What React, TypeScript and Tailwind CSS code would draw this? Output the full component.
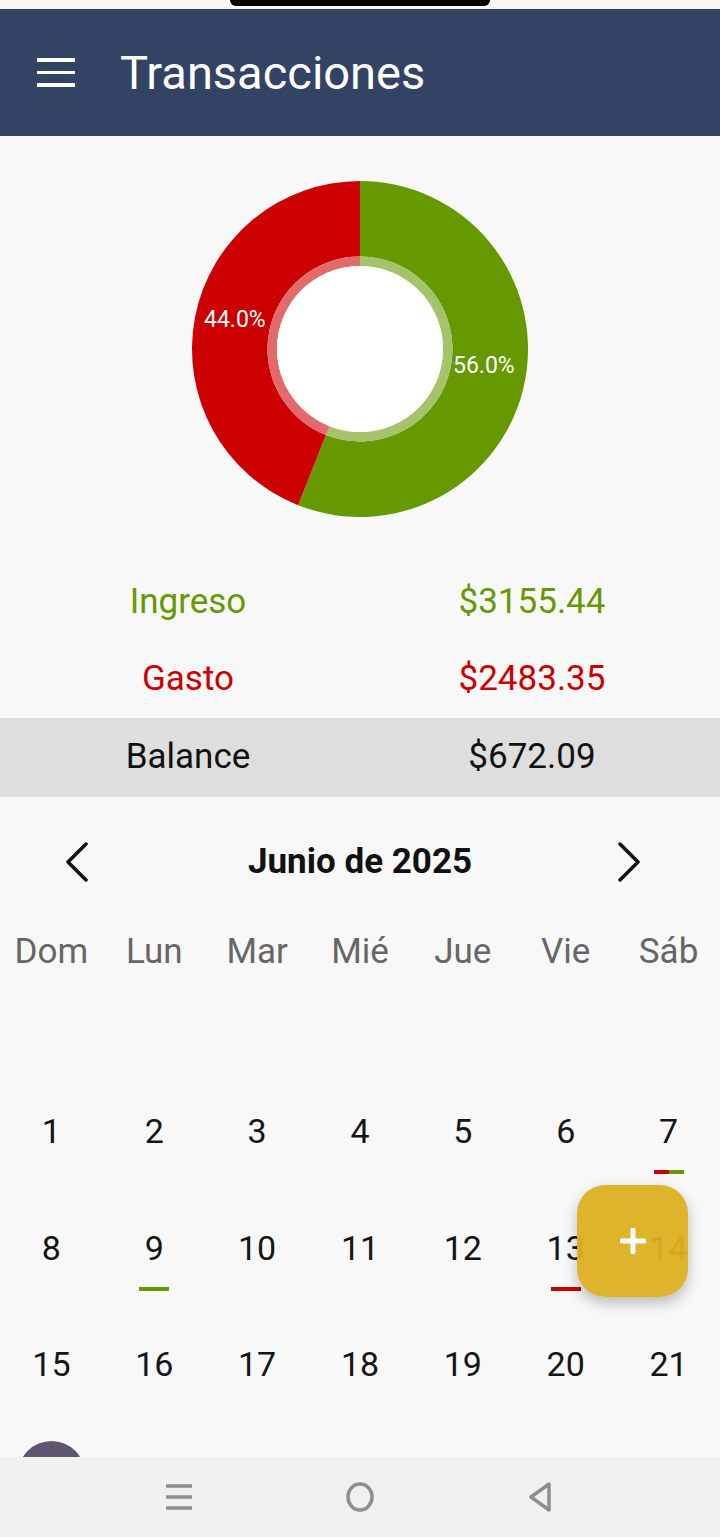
import React from "react";

const FONT = { fontFamily: "Roboto, 'Noto Sans', Arial, sans-serif" };

const CX = 168;
const CY = 168;

function arcPath(r0: number, r1: number, startDeg: number, endDeg: number) {
  // angles measured clockwise from 12 o'clock
  const pt = (r: number, a: number) => {
    const rad = ((a - 90) * Math.PI) / 180;
    return [CX + r * Math.cos(rad), CY + r * Math.sin(rad)];
  };
  const large = endDeg - startDeg > 180 ? 1 : 0;
  const [x1, y1] = pt(r1, startDeg);
  const [x2, y2] = pt(r1, endDeg);
  const [x3, y3] = pt(r0, endDeg);
  const [x4, y4] = pt(r0, startDeg);
  return `M${x1} ${y1} A${r1} ${r1} 0 ${large} 1 ${x2} ${y2} L${x3} ${y3} A${r0} ${r0} 0 ${large} 0 ${x4} ${y4} Z`;
}

function Donut() {
  const split = 0.56 * 360;
  return (
    <div className="relative w-[336px] h-[336px]">
      <svg width="336" height="336" viewBox="0 0 336 336">
        <path d={arcPath(92.5, 168, 0, split)} fill="#669900" />
        <path d={arcPath(92.5, 168, split, 360)} fill="#cc0000" />
        <path d={arcPath(83, 92.5, 0, split)} fill="#a4c46b" />
        <path d={arcPath(83, 92.5, split, 360)} fill="#e26a6a" />
        <circle cx={CX} cy={CY} r={83} fill="#ffffff" />
      </svg>
      <span className="absolute left-[12px] top-[125px] text-[23px] leading-[28px] text-white">44.0%</span>
      <span className="absolute left-[261px] top-[171px] text-[23px] leading-[28px] text-white">56.0%</span>
    </div>
  );
}

type Mark = "green" | "red" | "both";

const MARKS: Record<number, Mark> = { 7: "both", 9: "green", 13: "red" };

const WEEKS = [
  [1, 2, 3, 4, 5, 6, 7],
  [8, 9, 10, 11, 12, 13, 14],
  [15, 16, 17, 18, 19, 20, 21],
];

const DAYS = ["Dom", "Lun", "Mar", "Mié", "Jue", "Vie", "Sáb"];

function DayCell({ day }: { day: number }) {
  const mark = MARKS[day];
  return (
    <div className="flex flex-col items-center h-[116.5px] pt-[40px]">
      <span className="text-[34px] leading-[36px] text-[#151515]">{day}</span>
      {mark === "green" && <div className="mt-[21px] w-[30px] h-[4px] bg-[#669900]" />}
      {mark === "red" && <div className="mt-[21px] w-[30px] h-[4px] bg-[#cc0000]" />}
      {mark === "both" && (
        <div className="mt-[21px] flex">
          <div className="w-[15px] h-[4px] bg-[#cc0000]" />
          <div className="w-[15px] h-[4px] bg-[#669900]" />
        </div>
      )}
    </div>
  );
}

export default function App() {
  return (
    <div className="w-[720px] h-[1537px] flex flex-col bg-[#f8f8f8] overflow-hidden" style={FONT}>
      {/* status strip */}
      <div className="h-[9px] flex justify-center bg-[#f6f6f6]">
        <div className="w-[260px] h-[6px] bg-black rounded-b-[12px]" />
      </div>

      {/* app bar */}
      <div className="h-[127px] bg-[#334363] flex items-center">
        <div className="ml-[37px] w-[38px] flex flex-col gap-[9px]">
          <div className="h-[3.5px] bg-white" />
          <div className="h-[3.5px] bg-white" />
          <div className="h-[3.5px] bg-white" />
        </div>
        <h1 className="ml-[45px] text-[47px] leading-[54px] text-white">Transacciones</h1>
      </div>

      <div className="relative flex-1 overflow-hidden">
        {/* chart */}
        <div className="flex justify-center pt-[45px]">
          <Donut />
        </div>

        {/* summary */}
        <div className="mt-[46px]">
          <div className="grid grid-cols-2 px-[16px] h-[78px] items-center text-[35px] text-[#669900]">
            <span className="text-center">Ingreso</span>
            <span className="text-center">$3155.44</span>
          </div>
          <div className="grid grid-cols-2 px-[16px] h-[77px] items-center text-[35px] text-[#cc0000]">
            <span className="text-center">Gasto</span>
            <span className="text-center">$2483.35</span>
          </div>
          <div className="grid grid-cols-2 px-[16px] h-[79px] items-center text-[35px] text-[#111] bg-[#dedede]">
            <span className="text-center">Balance</span>
            <span className="text-center">$672.09</span>
          </div>
        </div>

        {/* calendar */}
        <div className="mt-[30px] h-[70px] flex items-center pl-[64px] pr-[78px]">
          <svg width="40" height="40" viewBox="0 0 40 40">
            <path d="M22 2 L4 20 L22 38" fill="none" stroke="#111" strokeWidth="3.5" strokeLinecap="round" strokeLinejoin="round" />
          </svg>
          <span className="flex-1 text-center text-[35px] font-bold text-[#111]">Junio de 2025</span>
          <svg width="26" height="40" viewBox="0 0 26 40">
            <path d="M4 2 L22 20 L4 38" fill="none" stroke="#111" strokeWidth="3.5" strokeLinecap="round" strokeLinejoin="round" />
          </svg>
        </div>

        <div className="mt-[25px] grid grid-cols-7 h-[60px] items-center">
          {DAYS.map((d) => (
            <span key={d} className="text-center text-[35px] text-[#666]">
              {d}
            </span>
          ))}
        </div>

        <div className="h-[91px]" />

        {WEEKS.map((week, i) => (
          <div key={i} className="grid grid-cols-7">
            {week.map((d) => (
              <DayCell key={d} day={d} />
            ))}
          </div>
        ))}

        {/* floating add button */}
        <button className="absolute left-[577px] top-[1049px] w-[111px] h-[112px] rounded-[28px] bg-[#ddb022]/95 shadow-[0_6px_14px_rgba(0,0,0,0.25)] flex items-center justify-center">
          <svg width="26" height="26" viewBox="0 0 26 26">
            <path d="M13 2 V24 M2 13 H24" stroke="white" strokeWidth="5" strokeLinecap="round" />
          </svg>
        </button>

        <div className="absolute left-[18px] top-[1305px] w-[67px] h-[67px] rounded-full bg-[#5e5670]" />
      </div>

      {/* system nav bar */}
      <div className="h-[80px] bg-[#f0f0f0] flex items-center justify-center gap-[152px]">
        <svg width="28" height="28" viewBox="0 0 28 28">
          <path d="M1 3 H27 M1 14 H27 M1 25 H27" stroke="#8e8e8e" strokeWidth="3.5" />
        </svg>
        <svg width="30" height="30" viewBox="0 0 30 30">
          <ellipse cx="15" cy="15" rx="12" ry="13" fill="none" stroke="#8e8e8e" strokeWidth="3.5" />
        </svg>
        <svg width="28" height="30" viewBox="0 0 28 30">
          <path d="M22 2 L4 15 L22 28 Z" fill="none" stroke="#8e8e8e" strokeWidth="3.5" strokeLinejoin="round" />
        </svg>
      </div>
    </div>
  );
}
